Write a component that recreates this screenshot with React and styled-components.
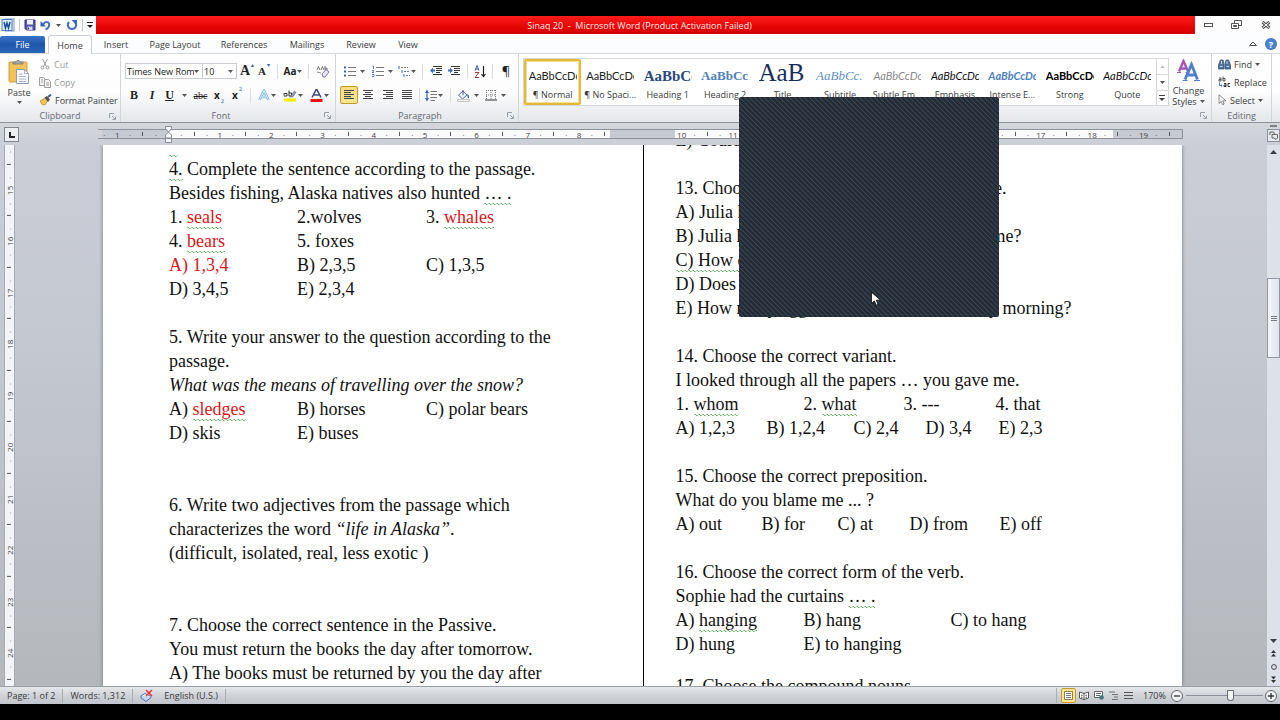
import React, { useState } from 'react'
import styled, { createGlobalStyle, css } from 'styled-components'

const GlobalStyle = createGlobalStyle`
  * { box-sizing: border-box; }
  body {
    margin: 0;
    background: #000;
    overflow: hidden;
    font-family: "Open Sans", "Noto Sans", sans-serif;
    font-size: 9px;
    color: #3b3b3b;
  }
  button, select, input { font: inherit; color: inherit; }
  button {
    display: flex;
    align-items: center;
    justify-content: center;
    padding: 0;
    border: 0;
    background: none;
    white-space: nowrap;
  }
  svg { display: block; flex: none; }
`

const styles = [
  { name: '¶ Normal', text: 'AaBbCcDc', selected: true },
  { name: '¶ No Spaci...', text: 'AaBbCcDc' },
  { name: 'Heading 1', text: 'AaBbCc', look: 'heading', size: 15, color: '#2b4a7a' },
  { name: 'Heading 2', text: 'AaBbCc', look: 'heading', size: 13, color: '#4f81bd' },
  { name: 'Title', text: 'AaB', look: 'title', size: 25, color: '#17305a' },
  { name: 'Subtitle', text: 'AaBbCc.', look: 'subtitle', size: 13, color: '#5b8fc6' },
  { name: 'Subtle Em...', text: 'AaBbCcDc', look: 'italic', color: '#8a8a8a' },
  { name: 'Emphasis', text: 'AaBbCcDc', look: 'italic', color: '#111' },
  { name: 'Intense E...', text: 'AaBbCcDc', look: 'boldItalic', color: '#4f81bd' },
  { name: 'Strong', text: 'AaBbCcDc', look: 'bold', color: '#000' },
  { name: 'Quote', text: 'AaBbCcDc', look: 'italic', color: '#111' },
]

const tabs = [
  ['Home', 44], ['Insert', 48], ['Page Layout', 70], ['References', 68],
  ['Mailings', 58], ['Review', 50], ['View', 44],
]

// every quarter of a ruler unit: number, dot, half mark, dot
const marks = (first, count) => Array.from({ length: count }, (_, i) => {
  const n = first + i
  if (n % 4 === 0) return n === 0 ? '' : String(Math.abs(n / 4))
  return n % 2 === 0 ? '|' : '·'
})
// no marks in the gap between the two text columns
const topMarks = marks(-5, 84).map((m, i) => (i > 39 && i < 45 ? '' : m))
const sideMarks = marks(57, 42)

const Caret = () => <svg width="5" height="3" viewBox="0 0 5 3"><path d="M0 0h5L2.5 3z" fill="#555" /></svg>

const Lines = ({ rows, color = '#444' }) => (
  <svg width="12" height="12" viewBox="0 0 12 12" stroke={color} strokeWidth="1">
    {rows.map(([a, b], i) => <path key={i} d={`M${a} ${i * 2 + 1.5}H${b}`} />)}
  </svg>
)

const ListIcon = ({ kind }) => (
  <svg width="12" height="12" viewBox="0 0 12 12">
    {kind === 'multi'
      ? <path d="M3 2.5h7M6 6.5h6M8 10.5h4" stroke="#777" strokeDasharray="2 1" />
      : <path d="M4 2.5h8M4 6.5h8M4 10.5h8" stroke="#777" />}
    {kind === 'multi'
      ? <path d="M1 1v3M4 5v3M6 9v3" stroke="#3c62a8" />
      : kind === 'bullet'
        ? <path d="M0 1.5h2v2H0zM0 5.5h2v2H0zM0 9.5h2v2H0z" fill="#3c62a8" />
        : <path d="M.5 1h1v3M0 5.5h1.500v1L0 7.500h2M0 9.500h2v2H0" fill="none" stroke="#3c62a8" strokeWidth=".8" />}
  </svg>
)

const IndentIcon = ({ right }) => (
  <svg width="13" height="12" viewBox="0 0 13 12">
    <path d="M3 1.500h9M6 3.500h6M6 5.500h6M6 7.500h4M3 9.500h9" stroke="#333" />
    <path d={right ? 'M5 5.500 2 2.500v2H0v2h2v2z' : 'M0 5.500l3-3v2h2v2H3v2z'} fill="#3c6fc0" />
  </svg>
)

const WordIcon = () => (
  <svg width="14" height="14" viewBox="0 0 14 14">
    <rect x="4" y="1" width="9" height="12" fill="#fff" stroke="#6d93c4" />
    <path d="M10 4h2M10 6h2M10 8h2M10 10h2" stroke="#8fb0da" />
    <rect x="1" y="1.500" width="10" height="11" fill="#dce9f8" stroke="#4f80bd" />
    <path d="M3 4 4.500 10 6 5l1.500 5L9 4" fill="none" stroke="#1d4f94" strokeWidth="1.500" />
  </svg>
)

const SaveIcon = () => (
  <svg width="12" height="12" viewBox="0 0 12 12">
    <path d="M1 1h10v10H2.500L1 9.500z" fill="#5552a8" stroke="#37357e" />
    <path d="M3 1h6v4.500H3z" fill="#eef1fb" />
    <path d="M3.500 7.500h5V11h-5z" fill="#d3d6ea" />
    <path d="M4.500 8.500v2" stroke="#37357e" />
  </svg>
)

const UndoIcon = () => (
  <svg width="11" height="12" viewBox="0 0 11 12">
    <path d="M3 5.500C5 2 9.500 2.500 9.200 6 9 8.500 7 10 5.500 10.500" fill="none" stroke="#4a6fc0" strokeWidth="2" />
    <path d="M.5 2v5.500H6z" fill="#3a62b5" />
  </svg>
)

const RedoIcon = () => (
  <svg width="12" height="12" viewBox="0 0 12 12">
    <path d="M3 3c-2.500 3-.5 7 3 7s5.500-4 3-7" fill="none" stroke="#4a6fc0" strokeWidth="2.200" />
    <path d="M5.500 1h5.500v5.500z" fill="#3a62b5" />
  </svg>
)

const PasteIcon = () => (
  <svg width="24" height="26" viewBox="0 0 24 26">
    <rect x="2" y="3" width="18" height="20" rx="1" fill="#f3c35a" stroke="#d3a03c" />
    <path d="M6 5V3h3c0-2 4-2 4 0h3v2z" fill="#a9a9a9" stroke="#777" strokeWidth=".8" />
    <path d="M9.500 10.500h8l4 4v10h-12z" fill="#fbfdff" stroke="#8b9db8" />
    <path d="M17.500 10.500v4h4M12 15h4M12 17.500h7M12 20h7M12 22.500h7" fill="none" stroke="#a5b5cd" />
  </svg>
)

const CutIcon = () => (
  <svg width="12" height="12" viewBox="0 0 12 12" fill="none" stroke="#9a9a9a">
    <path d="M3.500 1 7.500 8.500M8.500 1l-4 7.500" />
    <circle cx="3.500" cy="9.500" r="1.500" /><circle cx="8.500" cy="9.500" r="1.500" />
  </svg>
)

const CopyIcon = () => (
  <svg width="12" height="12" viewBox="0 0 12 12" fill="#f4f4f4" stroke="#a0a0a0">
    <path d="M.5 1.500h4l2 2v6h-6z" /><path d="M5.500 3.500h4l2 2v6h-6z" />
    <path d="M7 7h3M7 9h3M2 4h2M2 6h2" />
  </svg>
)

const BrushIcon = () => (
  <svg width="13" height="12" viewBox="0 0 13 12">
    <path d="M1 7 6 4l2.500 3L6 11 3 10.500z" fill="#f0c850" stroke="#b08a2c" strokeWidth=".7" />
    <path d="M5.500 3.500 8 2l3 3.500L9 8z" fill="#555" />
    <path d="m9 3 3-2.500" stroke="#4b5d80" strokeWidth="2" />
  </svg>
)

const EraserIcon = () => (
  <svg width="14" height="13" viewBox="0 0 14 13">
    <path d="M1 5 2.500 1.500 4 5M5 5l1.500-3.500L8 5M9 1v4h2V3H9" fill="none" stroke="#555" strokeWidth=".8" />
    <path d="M6 9 10 4.500l3 2.500-4 5H7z" fill="#e9e4f5" stroke="#6f6f9c" strokeWidth=".9" />
    <path d="m1 7 4 1" stroke="#888" />
  </svg>
)

const GlowIcon = () => (
  <svg width="12" height="12" viewBox="0 0 12 12" fill="none" strokeLinejoin="round">
    <path d="M1.500 11 6 1.500 10.500 11M3.500 8h5" stroke="#6fb1e0" strokeWidth="2.600" />
    <path d="M1.500 11 6 1.500 10.500 11M3.500 8h5" stroke="#eef8ff" />
  </svg>
)

const HighlightIcon = () => (
  <svg width="14" height="13" viewBox="0 0 14 13">
    <path d="M1 6.500V4.500h3v2.500H1M6 1.500v5.500h2.500V4H6" fill="none" stroke="#333" />
    <path d="m7 8 4-5.500 2 1L9.500 8z" fill="#9aa3bc" stroke="#596180" strokeWidth=".7" />
    <path d="M1 9.500h12v3H1z" fill="#ffee00" />
  </svg>
)

const FontColorIcon = () => (
  <svg width="13" height="13" viewBox="0 0 13 13">
    <path d="M2 8.500 6 .8h1L11 8.500M4 6h5" fill="none" stroke="#3c4a7c" strokeWidth="1.500" />
    <path d="M.5 10h12v3H.5z" fill="#ee1111" />
  </svg>
)

const SortIcon = () => (
  <svg width="13" height="13" viewBox="0 0 13 13" fill="none">
    <path d="m1 5.500 2-5 2 5M1.700 4h2.600" stroke="#3a5fb0" />
    <path d="M1 7.500h4l-4 5h4" stroke="#a23a3a" />
    <path d="M9.500 1v10M7.500 9l2 2.500 2-2.500" stroke="#222" strokeWidth="1.200" />
  </svg>
)

const SpacingIcon = () => (
  <svg width="12" height="13" viewBox="0 0 12 13">
    <path d="M5.500 2.500H12M5.500 5.500H12M5.500 8.500H12M5.500 11.500H10" stroke="#777" />
    <path d="M2 2v9" stroke="#3a62b5" strokeWidth="1.200" />
    <path d="M0 4 2 .5 4 4zM0 9l2 3.500L4 9z" fill="#3a62b5" />
  </svg>
)

const BucketIcon = () => (
  <svg width="13" height="13" viewBox="0 0 13 13">
    <path d="m1.500 6 4.500-4 4 4-4.500 4z" fill="#eef1f8" stroke="#4e5a80" strokeWidth=".9" />
    <path d="M6 6V1" stroke="#4e5a80" />
    <path d="M10 5c2.500 1 2.500 3 1.500 4.500C10.500 8.500 10.500 7 10 5z" fill="#3d62b8" />
    <path d="M.5 10.500h12v2H.5z" fill="#eee" stroke="#aaa" strokeWidth=".6" />
  </svg>
)

const BordersIcon = () => (
  <svg width="12" height="12" viewBox="0 0 12 12" fill="none" stroke="#777">
    <path d="M1.500 1v9M6 1v9M10.500 1v9M1 1.500h10M1 6h10" strokeDasharray="1 1" />
    <path d="M0 11h12" stroke="#333" />
  </svg>
)

const ChangeStylesIcon = () => (
  <svg width="24" height="23" viewBox="0 0 24 23" fill="none">
    <path d="M2 12.500 6.500 2 11 12.500M3.500 9.500h6" stroke="#a557b5" strokeWidth="2.400" />
    <path d="M0 13.500h4M8.500 13.500h4" stroke="#a557b5" />
    <path d="M8 20.500 14.500 5.500l6 15M10 16h9" stroke="#4f80c8" strokeWidth="2.800" />
    <path d="M5.500 21.500h5M17 21.500h6" stroke="#4f80c8" />
  </svg>
)

const FindIcon = () => (
  <svg width="13" height="11" viewBox="0 0 13 11">
    <path d="M2.500 1h2.500l1 4v5H.5V6zM8 1h2.500l2 5v4H7V5z" fill="#55729f" stroke="#33507e" strokeWidth=".8" />
    <path d="M2 7.500h2.500M8.500 7.500H11M3.500 2v3M9 2v3" stroke="#c9d8ee" />
  </svg>
)

const ReplaceIcon = () => (
  <svg width="13" height="12" viewBox="0 0 13 12" fill="none" strokeWidth=".9">
    <path d="M1 2h2v3H1V3.500h2M5 .5V5h2V2.500H5" stroke="#444" />
    <path d="M1.500 6.500v3H4M3 8.500 4.200 9.500 3 10.500" stroke="#3a62b5" />
    <path d="M6 7.500h2v3H6V9h2M12 7.500h-2v3h2" stroke="#222" />
  </svg>
)

const ArrowCursor = ({ big }) => (
  <svg width={big ? 12 : 9} height={big ? 16 : 12} viewBox="0 0 10 14">
    <path d="M1 1v10l2.500-2.300L5.200 12.500l1.700-.8L5.300 8H9z" fill="#fff" stroke={big ? '#111' : '#555'} strokeWidth=".8" />
  </svg>
)

const LaunchIcon = () => (
  <svg width="7" height="7" viewBox="0 0 7 7" fill="none" stroke="#9aa0a8">
    <path d="M.5 5V.5H5M3 3l3 3M6.500 3.500v3h-3" />
  </svg>
)

const Triangle = ({ down }) => (
  <svg width="7" height="4" viewBox="0 0 7 4"><path d={down ? 'M0 0h7L3.500 4z' : 'M0 4h7L3.500 0z'} fill="#3a3e45" /></svg>
)

const Launch = ({ label }) => <LaunchButton aria-label={label}><LaunchIcon /></LaunchButton>

function App() {
  const [tab, setTab] = useState('Home')
  const [zoom, setZoom] = useState(58)

  return (
    <Window>
      <GlobalStyle />

      <TitleBar>
        <QuickAccess>
          <WordIcon />
          <Rule $h={12} />
          <button aria-label="Save"><SaveIcon /></button>
          <UndoButton aria-label="Undo"><UndoIcon /><Caret /></UndoButton>
          <button aria-label="Redo"><RedoIcon /></button>
          <Rule $h={12} />
          <button aria-label="Customize">
            <svg width="6" height="6" viewBox="0 0 6 6"><path d="M0 .5h6" stroke="#222" /><path d="M0 3h6L3 6z" fill="#222" /></svg>
          </button>
        </QuickAccess>
        <TitleText>Sinaq 20&nbsp; -&nbsp; Microsoft Word (Product Activation Failed)</TitleText>
        <WindowButtons>
          <button aria-label="Minimize">
            <svg width="9" height="4" viewBox="0 0 9 4"><rect x=".5" y=".5" width="8" height="3" fill="#fff" stroke="#555" /></svg>
          </button>
          <button aria-label="Restore">
            <svg width="11" height="10" viewBox="0 0 11 10" fill="#fff" stroke="#555"><path d="M3.500.5h7v5h-7z" /><path d="M.5 3.500h7v5h-7zM2.500 5.500h3v1h-3z" /></svg>
          </button>
          <button aria-label="Close">
            <svg width="10" height="8" viewBox="0 0 10 8"><path d="M1.500 1 8.500 7M8.500 1l-7 6" stroke="#555" strokeWidth="3" /><path d="M1.500 1 8.500 7M8.500 1l-7 6" stroke="#fff" /></svg>
          </button>
        </WindowButtons>
      </TitleBar>

      <TabBar>
        <FileTab>File</FileTab>
        {tabs.map(([name, w]) => (
          <Tab key={name} $w={w} $active={tab === name} onClick={() => setTab(name)}>{name}</Tab>
        ))}
        <TabTools>
          <button aria-label="Minimize the ribbon">
            <svg width="8" height="6" viewBox="0 0 8 6"><path d="M4 1 7.500 4.500h-7z" fill="#fff" stroke="#555" /></svg>
          </button>
          <HelpButton aria-label="Help">?</HelpButton>
        </TabTools>
      </TabBar>

      <Ribbon>
        <Group $w={121}>
          <ClipboardBody>
            <BigButton><PasteIcon />Paste<Caret /></BigButton>
            <ButtonStack>
              <SmallButton $off><CutIcon />Cut</SmallButton>
              <SmallButton $off><CopyIcon />Copy</SmallButton>
              <SmallButton><BrushIcon />Format Painter</SmallButton>
            </ButtonStack>
          </ClipboardBody>
          <GroupLabel>Clipboard<Launch label="Clipboard options" /></GroupLabel>
        </Group>

        <Group $w={215}>
          <Tools>
            <ToolRow>
              <Combo $w={78}>
                <select aria-label="Font"><option>Times New Rom</option></select><Caret />
              </Combo>
              <Combo $w={34}>
                <select aria-label="Font size"><option>10</option></select><Caret />
              </Combo>
              <Tool $w={20} $serif aria-label="Grow font"><big>A</big><sup>▴</sup></Tool>
              <Tool $w={14} $serif aria-label="Shrink font"><small>A</small><sup>▾</sup></Tool>
              <Separator $w={12} />
              <Tool $w={20} aria-label="Change case"><b>Aa</b><Caret /></Tool>
              <Separator $w={10} />
              <Tool $w={20} aria-label="Clear formatting"><EraserIcon /></Tool>
            </ToolRow>
            <ToolRow>
              <Tool $w={18} $serif><b>B</b></Tool>
              <Tool $w={18} $serif><i>I</i></Tool>
              <Tool $w={30} $serif $gap={8}><u>U</u><Caret /></Tool>
              <Tool $w={19} $serif><s>abc</s></Tool>
              <Tool $w={18}><b>x</b><sub>2</sub></Tool>
              <Tool $w={18}><b>x</b><sup>2</sup></Tool>
              <Separator $w={8} />
              <Tool $w={26} aria-label="Text effects"><GlowIcon /><Caret /></Tool>
              <Tool $w={26} aria-label="Highlight"><HighlightIcon /><Caret /></Tool>
              <Tool $w={26} aria-label="Font color"><FontColorIcon /><Caret /></Tool>
            </ToolRow>
          </Tools>
          <GroupLabel $shift>Font<Launch label="Font options" /></GroupLabel>
        </Group>

        <Group $w={183}>
          <Tools>
            <ToolRow>
              <Tool $w={28} $gap={4} aria-label="Bullets"><ListIcon kind="bullet" /><Caret /></Tool>
              <Tool $w={28} $gap={4} aria-label="Numbering"><ListIcon kind="number" /><Caret /></Tool>
              <Tool $w={22} aria-label="Multilevel list"><ListIcon kind="multi" /><Caret /></Tool>
              <Separator $w={8} />
              <Tool $w={20} aria-label="Decrease indent"><IndentIcon /></Tool>
              <Tool $w={17} aria-label="Increase indent"><IndentIcon right /></Tool>
              <Separator $w={8} />
              <Tool $w={18} aria-label="Sort"><SortIcon /></Tool>
              <Separator $w={7} />
              <Tool $w={20} $large>¶</Tool>
            </ToolRow>
            <ToolRow>
              <Tool $w={18} $on aria-label="Align left"><Lines rows={[[1, 11], [1, 8], [1, 11], [1, 8], [1, 11]]} /></Tool>
              <Tool $w={20} aria-label="Center"><Lines rows={[[1, 11], [3, 9], [1, 11], [3, 9], [1, 11]]} /></Tool>
              <Tool $w={20} aria-label="Align right"><Lines rows={[[1, 11], [4, 11], [1, 11], [4, 11], [1, 11]]} /></Tool>
              <Tool $w={18} aria-label="Justify"><Lines rows={[[1, 11], [1, 11], [1, 11], [1, 11], [1, 11]]} /></Tool>
              <Separator $w={6} />
              <Tool $w={24} aria-label="Line spacing"><SpacingIcon /><Caret /></Tool>
              <Separator $w={8} />
              <Tool $w={28} $gap={4} aria-label="Shading"><BucketIcon /><Caret /></Tool>
              <Tool $w={26} $gap={4} aria-label="Borders"><BordersIcon /><Caret /></Tool>
            </ToolRow>
          </Tools>
          <GroupLabel $shift>Paragraph<Launch label="Paragraph options" /></GroupLabel>
        </Group>

        <Group $grow>
          <StylesBody>
            <Gallery>
              {styles.map(s => (
                <StyleCard key={s.name} $selected={s.selected}>
                  <Sample $look={s.look} $size={s.size} $color={s.color}>{s.text}</Sample>
                  <span>{s.name}</span>
                </StyleCard>
              ))}
              <GalleryScroll>
                <button aria-label="Previous styles"><Caret /></button>
                <button aria-label="Next styles"><Caret /></button>
                <button aria-label="More styles">
                  <svg width="6" height="6" viewBox="0 0 6 6"><path d="M0 .5h6" stroke="#444" /><path d="M0 3h6L3 6z" fill="#444" /></svg>
                </button>
              </GalleryScroll>
            </Gallery>
            <ChangeStyles>
              <ChangeStylesIcon />
              <span>Change</span>
              <span>Styles <Caret /></span>
            </ChangeStyles>
          </StylesBody>
          <GroupLabel><Launch label="Styles options" /></GroupLabel>
        </Group>

        <Group $w={60}>
          <ButtonStack>
            <SmallButton><FindIcon />Find<Caret /></SmallButton>
            <SmallButton><ReplaceIcon />Replace</SmallButton>
            <SmallButton><ArrowCursor />Select<Caret /></SmallButton>
          </ButtonStack>
          <GroupLabel>Editing</GroupLabel>
        </Group>
      </Ribbon>

      <RulerBar>
        <TabStop aria-label="Tab selector">
          <svg width="6" height="6" viewBox="0 0 6 6"><path d="M1 0v5h5" fill="none" stroke="#222" strokeWidth="2" /></svg>
        </TabStop>
        <Ruler>
          {topMarks.map((m, i) => (
            <Mark key={i}>
              {m === '|' ? <HalfMark /> : m}
              {i === 5 && (
                <Indent>
                  <svg width="8" height="17" viewBox="0 0 8 17" fill="#f4f5f7" stroke="#8a8f98">
                    <path d="M.5.500h6v2L3.500 6 .5 2.500zM3.500 6l3 3v3h-6V9zM.5 12.500h6v4h-6z" />
                  </svg>
                </Indent>
              )}
            </Mark>
          ))}
        </Ruler>
        <RulerToggle>
          <i />
          <button aria-label="View ruler">
            <svg width="10" height="9" viewBox="0 0 10 9" fill="none" stroke="#666"><path d="M1 4V1h4v2M3 3.500h5.500V7L7 8.500 5 7H3z" /></svg>
          </button>
        </RulerToggle>
      </RulerBar>

      <Workspace>
        <SideRuler>
          {sideMarks.map((m, i) => <SideMark key={i}>{m === '|' ? <HalfMark $flat /> : m}</SideMark>)}
        </SideRuler>

        <Page>
          <LeftColumn>
            <p><Check>&nbsp;&nbsp;</Check></p>
            <p><Check>4.</Check> Complete the sentence according to the passage.</p>
            <p>Besides fishing, Alaska natives also hunted <Check>… .</Check></p>
            <Row $cols="128px 129px auto"><span>1. <Check $red>seals</Check></span><span>2.wolves</span><span>3. <Check $red>whales</Check></span></Row>
            <Row $cols="128px auto"><span>4. <Check $red>bears</Check></span><span>5. foxes</span></Row>
            <Row $cols="128px 129px auto"><Red>A) 1,3,4</Red><span>B) 2,3,5</span><span>C) 1,3,5</span></Row>
            <Row $cols="128px auto"><span>D) 3,4,5</span><span>E) 2,3,4</span></Row>
            <p />
            <p>5. Write your answer to the question according to the</p>
            <p>passage.</p>
            <p><i>What was the means of travelling over the snow?</i></p>
            <Row $cols="128px 129px auto"><span>A) <Check $red>sledges</Check></span><span>B) horses</span><span>C) polar bears</span></Row>
            <Row $cols="128px auto"><span>D) skis</span><span>E) buses</span></Row>
            <p />
            <p />
            <p>6. Write two adjectives from the passage which</p>
            <p>characterizes the word <i>“life in Alaska”</i>.</p>
            <p>(difficult, isolated, real, less exotic )</p>
            <p />
            <p />
            <p>7. Choose the correct sentence in the Passive.</p>
            <p>You must return the books the day after tomorrow.</p>
            <p>A) The books must be returned by you the day after</p>
          </LeftColumn>

          <RightColumn>
            <p>E) Could</p>
            <p />
            <Covered $w={331}><span>13. Choose</span><span>tense.</span></Covered>
            <p>A) Julia has</p>
            <Covered $w={346}><span>B) Julia has</span><span>time?</span></Covered>
            <p><Check>C) How often</Check></p>
            <p>D) Does</p>
            <Covered $w={396}><span>E) How many eggs</span><span>every morning?</span></Covered>
            <p />
            <p>14. Choose the correct variant.</p>
            <p>I looked through all the papers … you gave me.</p>
            <Row $cols="128px 100px 92px auto"><span>1. <Check>whom</Check></span><span>2. <Check>what</Check></span><span>3. ---</span><span>4. that</span></Row>
            <Row $cols="91px 87px 72px 73px auto"><span>A) 1,2,3</span><span>B) 1,2,4</span><span>C) 2,4</span><span>D) 3,4</span><span>E) 2,3</span></Row>
            <p />
            <p>15. Choose the correct preposition.</p>
            <p>What do you blame me ... ?</p>
            <Row $cols="86px 76px 72px 90px auto"><span>A) out</span><span>B) for</span><span>C) at</span><span>D) from</span><span>E) off</span></Row>
            <p />
            <p>16. Choose the correct form of the verb.</p>
            <p>Sophie had the curtains <Check>… .</Check></p>
            <Row $cols="128px 147px auto"><span>A) <Check>hanging</Check></span><span>B) hang</span><span>C) to hang</span></Row>
            <Row $cols="128px auto"><span>D) hung</span><span>E) to hanging</span></Row>
            <ShortBreak />
            <p>17. Choose the compound nouns.</p>
          </RightColumn>
        </Page>

        <ScrollBar>
          <ScrollButton aria-label="Scroll up"><Triangle /></ScrollButton>
          <Track $part={120} />
          <Thumb><i /><i /><i /></Thumb>
          <Track $part={276} />
          <ScrollButton aria-label="Scroll down"><Triangle down /></ScrollButton>
          <ScrollButton aria-label="Previous page">
            <svg width="5" height="7" viewBox="0 0 5 7"><path d="M2.500 0 5 3H0zM2.500 3.500l2.500 3H0z" fill="#333" /></svg>
          </ScrollButton>
          <ScrollButton aria-label="Browse object">
            <svg width="6" height="6" viewBox="0 0 6 6"><circle cx="3" cy="3" r="2.400" fill="#dfe3ea" stroke="#444" /></svg>
          </ScrollButton>
          <ScrollButton aria-label="Next page">
            <svg width="5" height="7" viewBox="0 0 5 7"><path d="M0 .5h5l-2.500 3zM0 4h5L2.500 7z" fill="#333" /></svg>
          </ScrollButton>
        </ScrollBar>
      </Workspace>

      <StatusBar>
        <StatusItem>Page: 1 of 2</StatusItem>
        <StatusItem>Words: 1,312</StatusItem>
        <StatusItem $bare>
          <svg width="14" height="13" viewBox="0 0 14 13">
            <path d="m1 7 4-2.500 6 3-5 4z" fill="#fff" stroke="#4664ac" strokeWidth=".9" />
            <path d="M1 7v2l5 3.500 5-4V7.500" fill="#c6d3ee" stroke="#4664ac" strokeWidth=".9" />
            <path d="m6 1 6 6M12 1 6 7" stroke="#e33" strokeWidth="1.500" />
          </svg>
        </StatusItem>
        <StatusItem $last>English (U.S.)</StatusItem>
        <Views>
          <ViewButton $on aria-label="Print layout"><svg width="9" height="9" viewBox="0 0 9 9"><path d="M.5.500h8v8h-8z" fill="#fff" stroke="#8a8055" /><path d="M2 2.500h5M2 4.500h5M2 6.500h5" stroke="#777" /></svg></ViewButton>
          <ViewButton aria-label="Full screen reading">
            <svg width="10" height="9" viewBox="0 0 10 9" fill="#fff" stroke="#555"><path d="M.5 1 5 2.500 9.500 1v6L5 8.500.5 7zM5 2.500v6M2 4l1.500.5M2 6l1.500.5M8 4l-1.500.5M8 6l-1.500.5" /></svg>
          </ViewButton>
          <ViewButton aria-label="Web layout">
            <svg width="10" height="9" viewBox="0 0 10 9"><path d="M.5.500h8v6h-8zM2 2.500h5M2 4.500h4" fill="#fff" stroke="#666" /><circle cx="7.500" cy="6.500" r="2.300" fill="#3c7a78" /></svg>
          </ViewButton>
          <ViewButton aria-label="Outline">
            <svg width="9" height="9" viewBox="0 0 9 9"><path d="M0 1h6M3 3.500h6M5 6h4M3 8.500h6" stroke="#777" /></svg>
          </ViewButton>
          <ViewButton aria-label="Draft">
            <svg width="9" height="9" viewBox="0 0 9 9"><path d="M0 1.500h9M0 4.500h9M0 7.500h9" stroke="#555" /></svg>
          </ViewButton>
        </Views>
        <ZoomLabel htmlFor="zoom">170%</ZoomLabel>
        <RoundButton aria-label="Zoom out"><svg width="6" height="6" viewBox="0 0 6 6"><path d="M0 3h6" stroke="#333" strokeWidth="1.300" /></svg></RoundButton>
        <ZoomSlider id="zoom" type="range" min="0" max="100" value={zoom} onChange={e => setZoom(e.target.value)} />
        <RoundButton aria-label="Zoom in"><svg width="6" height="6" viewBox="0 0 6 6"><path d="M0 3h6M3 0v6" stroke="#333" strokeWidth="1.300" /></svg></RoundButton>
      </StatusBar>

      <VideoTile>
        <Pointer><ArrowCursor big /></Pointer>
      </VideoTile>
    </Window>
  )
}

const Window = styled.div`
  position: relative;
  display: flex;
  flex-direction: column;
  height: 100vh;
  padding: 16px 0;
  overflow: hidden;
  background: #000;
`

const TitleBar = styled.header`
  display: flex;
  flex: none;
  height: 18px;
  background: #fdfdfd;
`

const QuickAccess = styled.div`
  display: flex;
  align-items: center;
  justify-content: space-between;
  width: 96px;
  padding: 0 3px 0 1px;
`

const UndoButton = styled.button`
  gap: 5px;
`

const Rule = styled.i`
  width: 1px;
  height: ${p => p.$h}px;
  background: #c3c8d0;
`

const TitleText = styled.div`
  flex: 1;
  padding-right: 12px;
  line-height: 19px;
  text-align: center;
  color: #ffe9e9;
  background: linear-gradient(#fb1c1c, #e60505 60%, #d40000);
`

const WindowButtons = styled.div`
  display: flex;
  align-items: center;
  justify-content: space-around;
  width: 85px;
`

const TabBar = styled.nav`
  display: flex;
  align-items: flex-end;
  flex: none;
  height: 20px;
  background: #fcfdfe;
  border-bottom: 1px solid #d5dadd;
`

const FileTab = styled.button`
  width: 45px;
  height: 17px;
  margin-right: 3px;
  color: #fff;
  background: linear-gradient(#3a74c8, #1f56ab 50%, #2a66bd);
  border-radius: 2px 2px 0 0;
`

const Tab = styled.button`
  width: ${p => p.$w}px;
  height: 18px;
  border: 1px solid transparent;
  border-bottom: 0;
  ${p => p.$active && css`
    height: 19px;
    margin-bottom: -1px;
    background: #fff;
    border-color: #cbd0d6;
    border-radius: 3px 3px 0 0;
  `}
`

const TabTools = styled.div`
  display: flex;
  align-items: center;
  gap: 8px;
  height: 18px;
  margin-left: auto;
  padding-right: 3px;
`

const HelpButton = styled.button`
  width: 12px;
  height: 12px;
  border-radius: 50%;
  font-weight: 700;
  color: #fff;
  background: radial-gradient(#5d95dc, #2f68b6);
`

const Ribbon = styled.section`
  display: flex;
  flex: none;
  height: 69px;
  padding-right: 8px;
  background: linear-gradient(#fff, #fdfdfe 55%, #eceef1 85%, #e4e7eb);
  border-bottom: 1px solid #8e939a;
`

const Group = styled.div`
  display: flex;
  flex-direction: column;
  flex: ${p => (p.$grow ? '1' : 'none')};
  min-width: 0;
  width: ${p => (p.$grow ? 'auto' : p.$w + 'px')};
  border-right: 1px solid #d3d7dc;
`

const GroupLabel = styled.div`
  display: flex;
  align-items: center;
  justify-content: center;
  height: 14px;
  margin-top: auto;
  padding-right: ${p => (p.$shift ? 14 : 0)}px;
  position: relative;
  color: #666a70;
`

const LaunchButton = styled.button`
  position: absolute;
  right: 4px;
  top: 4px;
`

const ClipboardBody = styled.div`
  display: flex;
`

const BigButton = styled.button`
  flex-direction: column;
  width: 38px;
  height: 52px;
  padding-top: 2px;
  gap: 2px;
  line-height: 12px;
`

const ButtonStack = styled.div`
  display: flex;
  flex-direction: column;
  padding-top: 1px;
`

const SmallButton = styled.button`
  justify-content: flex-start;
  gap: 3px;
  height: 18px;
  padding-left: 1px;
  color: ${p => (p.$off ? '#9a9a9a' : '#3b3b3b')};
  ${Group} > ${ButtonStack} > & { padding-left: 6px; }
`

const Tools = styled.div`
  padding: 5px 4px 0;
`

const ToolRow = styled.div`
  display: flex;
  align-items: center;
  height: 24px;
`

const Tool = styled.button`
  flex: none;
  width: ${p => p.$w}px;
  height: 18px;
  gap: ${p => p.$gap || 1}px;
  font-size: ${p => (p.$large ? 13 : 10)}px;
  color: #222;
  ${p => p.$serif && css`
    font-family: "Liberation Serif", serif;
    font-size: 12px;
  `}
  s { font-size: 10px; }
  sub, sup { font-size: 6px; line-height: 6px; color: #3a5fa8; }
  sup { align-self: flex-start; }
  sub { align-self: flex-end; }
  big { font-size: 14px; font-weight: 700; }
  small { font-size: 11px; font-weight: 700; }
  u { font-weight: 700; }
  i { font-weight: 700; }
  ${p => p.$on && css`
    background: linear-gradient(#f7dc84, #fbe591);
    border: 1px solid #c29b2f;
    border-radius: 2px;
  `}
`

const Separator = styled.i`
  flex: none;
  width: ${p => p.$w}px;
  height: 15px;
  background: linear-gradient(#d9dce1, #d9dce1) center / 1px 100% no-repeat;
`

const Combo = styled.div`
  display: flex;
  align-items: center;
  flex: none;
  width: ${p => p.$w}px;
  height: 16px;
  padding-right: 3px;
  background: #fff;
  border: 1px solid #c9cdd3;
  & + & { border-left: 0; }
  select {
    flex: 1;
    min-width: 0;
    padding: 0 0 0 1px;
    border: 0;
    outline: 0;
    appearance: none;
    background: none;
    color: #222;
  }
`

const StylesBody = styled.div`
  display: flex;
  padding: 4px 3px 0 4px;
`

const Gallery = styled.div`
  display: flex;
  flex: 1;
  min-width: 0;
  height: 48px;
  background: #fff;
  border: 1px solid #d3d7dc;
`

const StyleCard = styled.button`
  flex: 1;
  min-width: 0;
  flex-direction: column;
  justify-content: flex-end;
  padding: 0 3px 1px;
  overflow: hidden;
  line-height: 15px;
  border: 2px solid ${p => (p.$selected ? '#e5b93c' : 'transparent')};
  border-radius: 2px;
  ${p => p.$selected && css`box-shadow: inset 0 0 0 1px #f7e08d;`}
`

const looks = {
  heading: 'font-family: "Liberation Serif", serif; font-weight: 700;',
  title: 'font-family: "Liberation Serif", serif; line-height: 20px;',
  subtitle: 'font-family: "Liberation Serif", serif; font-style: italic;',
  italic: 'font-style: italic;',
  bold: 'font-weight: 700;',
  boldItalic: 'font-style: italic; font-weight: 700;',
}

const Sample = styled.span`
  display: block;
  width: 48px;
  height: 24px;
  line-height: 26px;
  overflow: hidden;
  text-align: left;
  font-family: Lato, sans-serif;
  font-size: ${p => p.$size || 11}px;
  color: ${p => p.$color || '#222'};
  ${p => looks[p.$look]}
`

const GalleryScroll = styled.div`
  display: grid;
  grid-template-rows: repeat(3, 1fr);
  width: 12px;
  border-left: 1px solid #d3d7dc;
  button + button { border-top: 1px solid #d3d7dc; }
  button:first-child { opacity: .4; transform: rotate(180deg); }
`

const ChangeStyles = styled.button`
  flex-direction: column;
  justify-content: flex-start;
  width: 39px;
  height: 50px;
  padding-top: 1px;
  line-height: 11px;
  svg { margin-bottom: 3px; }
  span { display: flex; align-items: center; gap: 3px; }
  span svg { margin: 0; }
`

const RulerBar = styled.div`
  display: flex;
  align-items: flex-end;
  flex: none;
  height: 22px;
  background: linear-gradient(#d4d7dc, #cbced5);
`

const TabStop = styled.button`
  width: 15px;
  height: 15px;
  margin: 0 79px 3px 4px;
  background: #eceef1;
  border: 1px solid #80858e;
`

const Ruler = styled.div`
  display: flex;
  flex: 1;
  height: 10px;
  margin: 0 84px 6px 0;
  padding: 0 6px 0 0;
  color: #444;
  font-size: 8px;
  background: linear-gradient(90deg, transparent 4px, #c6cad2 4px 6.5%, #fbfbfc 6.5% 47.2%, #c6cad2 47.2% 53.2%, #fbfbfc 53.2% 93.6%, #c6cad2 93.6%);
  border: solid #8e939b;
  border-width: 1px 1px 1px 0;
`

const Mark = styled.span`
  position: relative;
  display: flex;
  align-items: center;
  justify-content: center;
  flex: 1;
  min-width: 0;
`

const HalfMark = styled.i`
  width: ${p => (p.$flat ? 4 : 1)}px;
  height: ${p => (p.$flat ? 1 : 4)}px;
  background: #555;
`

const Indent = styled.span`
  position: absolute;
  top: -4px;
  left: 3px;
`

const RulerToggle = styled.div`
  width: 13px;
  padding-bottom: 3px;
  i {
    display: block;
    width: 7px;
    height: 2px;
    margin: 0 auto 2px;
    background: #7b8089;
  }
  button {
    width: 13px;
    height: 13px;
    background: #e6e8ec;
    border: 1px solid #8b9099;
  }
`

const Workspace = styled.main`
  display: flex;
  flex: 1;
  min-height: 0;
  background: linear-gradient(#cbced6, #c3c7ce 40%, #b4b8bd);
`

const SideRuler = styled.div`
  display: flex;
  flex-direction: column;
  width: 11px;
  margin-left: 4px;
  font-size: 8px;
  color: #444;
  background: #f3f4f7;
  border: solid #a7abb3;
  border-width: 0 1px;
`

const SideMark = styled.span`
  display: flex;
  align-items: center;
  justify-content: center;
  flex: 1;
  min-height: 0;
  line-height: 9px;
  writing-mode: vertical-rl;
  transform: rotate(180deg);
`

const Page = styled.article`
  display: grid;
  grid-template-columns: minmax(0, 1fr) minmax(0, 1fr);
  flex: 1;
  min-width: 0;
  margin: 0 85px 0 88px;
  overflow: hidden;
  background: #fff;
  box-shadow: 0 0 4px #6f747b;
  clip-path: inset(0 -6px);
  font: 18px/24px "Liberation Serif", "Times New Roman", serif;
  color: #111;
  white-space: nowrap;
  p { height: 24px; margin: 0; }
`

const LeftColumn = styled.div`
  margin-top: -12px;
  padding-left: 66px;
`

const RightColumn = styled.div`
  margin-top: -17px;
  padding-left: 32px;
  border-left: 1px solid #000;
`

const Row = styled.div`
  display: grid;
  grid-template-columns: ${p => p.$cols};
  height: 24px;
`

const Covered = styled.div`
  display: flex;
  justify-content: space-between;
  width: ${p => p.$w}px;
  height: 24px;
`

const ShortBreak = styled.div`
  height: 18px;
`

const Red = styled.span`
  color: #d8161b;
`

const Check = styled.span`
  color: ${p => (p.$red ? '#d8161b' : 'inherit')};
  padding-bottom: 2px;
  background:
    linear-gradient(45deg, transparent 40%, #62b062 40% 60%, transparent 60%) 0 100% / 4px 2px repeat-x,
    linear-gradient(-45deg, transparent 40%, #a9d6a9 40% 60%, transparent 60%) 2px 100% / 4px 2px repeat-x;
`

const ScrollBar = styled.div`
  display: flex;
  flex-direction: column;
  width: 13px;
  background: #dde1ea;
`

const ScrollButton = styled.button`
  flex: none;
  height: 13px;
`

const Track = styled.div`
  flex: ${p => p.$part};
`

const Thumb = styled.div`
  display: flex;
  flex-direction: column;
  align-items: center;
  justify-content: center;
  gap: 1px;
  flex: none;
  height: 80px;
  background: linear-gradient(90deg, #f4f6fb, #dfe4ee);
  border: 1px solid #9298a5;
  i { width: 6px; height: 1px; background: #777c86; }
`

const StatusBar = styled.footer`
  display: flex;
  align-items: center;
  flex: none;
  height: 18px;
  background: linear-gradient(#e6e8eb, #cfd2d7 50%, #c1c5cb);
  border-top: 1px solid #9a9ea5;
`

const StatusItem = styled.span`
  display: flex;
  align-items: center;
  height: 14px;
  padding: 0 7px 0 ${p => (p.$last ? 3 : 7)}px;
  border-right: ${p => (p.$bare ? 0 : 1)}px solid #a9adb4;
`

const Views = styled.div`
  display: flex;
  align-items: center;
  margin-left: auto;
  padding: 0 7px 0 4px;
  border-left: 1px solid #a9adb4;
`

const ViewButton = styled.button`
  width: 15px;
  height: 15px;
  border: 1px solid ${p => (p.$on ? '#c99b2c' : 'transparent')};
  border-radius: 2px;
  background: ${p => (p.$on ? '#fbe491' : 'none')};
`

const ZoomLabel = styled.label`
  width: 28px;
`

const RoundButton = styled.button`
  width: 12px;
  height: 12px;
  margin-right: 3px;
  background: #f3f4f6;
  border: 1px solid #60646b;
  border-radius: 50%;
`

const ZoomSlider = styled.input`
  width: 77px;
  height: 12px;
  margin: 0 2px 0 0;
  appearance: none;
  background: linear-gradient(#8b9098, #8b9098) center / 100% 1px no-repeat;
  &::-webkit-slider-thumb {
    appearance: none;
    width: 7px;
    height: 11px;
    background: #f4f5f7;
    border: 1px solid #666b73;
    border-radius: 1px 1px 4px 4px;
  }
`

const VideoTile = styled.aside`
  position: absolute;
  left: 739px;
  top: 97px;
  width: 260px;
  height: 220px;
  border-radius: 2px;
  background: #242c38 linear-gradient(45deg, transparent 38%, #3b4651 50%, transparent 62%) 0 0 / 5px 5px;
`

const Pointer = styled.span`
  position: absolute;
  left: 131px;
  top: 194px;
`

export default App
